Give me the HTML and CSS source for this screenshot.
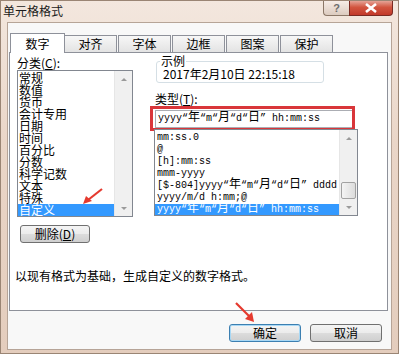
FILE: index.html
```html
<!DOCTYPE html>
<html lang="zh">
<head>
    <meta charset="UTF-8">
    <title>单元格格式</title>
    <link rel="stylesheet" href="styles.css">
</head>
<body>
    <div class="window">
        <div class="titlebar">
            <span class="title">单元格格式</span>
            <div class="controls">
                <span class="help">?</span>
                <span class="close">
                    <svg width="14" height="10" viewBox="0 0 14 10"><path d="M2 1 L12 9 M12 1 L2 9" stroke="#fff" stroke-width="2.6"/></svg>
                </span>
            </div>
        </div>

        <div class="client">
            <div class="tabs">
                <span class="tab active">数字</span>
                <span class="tab">对齐</span>
                <span class="tab">字体</span>
                <span class="tab">边框</span>
                <span class="tab">图案</span>
                <span class="tab">保护</span>
            </div>

            <div class="panel">
                <div class="cols">
                    <div class="left">
                        <div class="label">分类(<u>C</u>):</div>
                        <div class="listbox cat">
                            <ul>
                                <li>常规</li>
                                <li>数值</li>
                                <li>货币</li>
                                <li>会计专用</li>
                                <li>日期</li>
                                <li>时间</li>
                                <li>百分比</li>
                                <li>分数</li>
                                <li>科学记数</li>
                                <li>文本</li>
                                <li>特殊</li>
                                <li class="sel">自定义</li>
                            </ul>
                            <div class="vscroll">
                                <span class="arrow up"></span>
                                <span class="arrow down"></span>
                            </div>
                        </div>
                        <button class="btn del">删除(<u>D</u>)</button>
                    </div>

                    <div class="right">
                        <div class="sample">
                            <span class="sample-title">示例</span>
                            2017年2月10日 22:15:18
                        </div>
                        <div class="label type-label">类型(<u>T</u>):</div>
                        <div class="type-input mono">yyyy“<span class="cj">年</span>“m“<span class="cj">月</span>“d“<span class="cj">日</span>” hh:mm:ss</div>
                        <div class="listbox fmt mono">
                            <ul>
                                <li>mm:ss.0</li>
                                <li>@</li>
                                <li>[h]:mm:ss</li>
                                <li>mmm-yyyy</li>
                                <li>[$-804]yyyy“<span class="cj">年</span>“m“<span class="cj">月</span>“d“<span class="cj">日</span>” dddd</li>
                                <li>yyyy/m/d h:mm;@</li>
                                <li class="sel">yyyy“<span class="cj">年</span>“m“<span class="cj">月</span>“d“<span class="cj">日</span>” hh:mm:ss</li>
                            </ul>
                            <div class="vscroll">
                                <span class="arrow up"></span>
                                <span class="thumb"></span>
                                <span class="arrow down"></span>
                            </div>
                        </div>
                    </div>
                </div>
                <p class="desc">以现有格式为基础，生成自定义的数字格式。</p>
            </div>

            <div class="actions">
                <button class="btn ok">确定</button>
                <button class="btn">取消</button>
            </div>
        </div>

        <!-- annotation arrows -->
        <svg class="pointer pointer-cat" width="24" height="20" viewBox="0 0 24 20">
            <path d="M20 2 L6 13" stroke="#e53a2f" stroke-width="2.2"/>
            <path d="M1 17 L4 9 L10 14 Z" fill="#e53a2f"/>
        </svg>
        <svg class="pointer pointer-ok" width="24" height="24" viewBox="0 0 24 24">
            <path d="M2 2 L15 15" stroke="#e53a2f" stroke-width="2.2"/>
            <path d="M20 21 L11 18 L18 11 Z" fill="#e53a2f"/>
        </svg>
    </div>
</body>
</html>
```

FILE: styles.css
```css
body {
    margin: 0;
    padding: 0;
    font-family: "Noto Sans CJK SC", "Liberation Sans", sans-serif;
    font-size: 12px;
    color: #000;
}

.window {
    position: relative;
    width: 399px;
    height: 354px;
    box-sizing: border-box;
    background: linear-gradient(180deg, #f3e7de 0%, #ead6c8 40%, #e4cdbd 100%);
    border: 1px solid #9a8574;
    display: flex;
    flex-direction: column;
}

.titlebar {
    height: 21px;
    display: flex;
    align-items: flex-start;
}

.title {
    margin: 3px 0 0 2px;
    font-size: 12px;
    line-height: 14px;
    color: #1a1a1a;
}

.controls {
    margin-left: auto;
    margin-right: 5px;
    display: flex;
}

.help {
    width: 26px;
    height: 15px;
    box-sizing: border-box;
    border: 1px solid #8b7767;
    border-top: none;
    border-right: none;
    border-radius: 0 0 0 4px;
    background: linear-gradient(180deg, #f6ece6, #dccbbf);
    color: #6d6d6d;
    font-family: "Liberation Sans", sans-serif;
    font-weight: bold;
    font-size: 11px;
    line-height: 14px;
    text-align: center;
}

.close {
    width: 44px;
    height: 15px;
    box-sizing: border-box;
    border: 1px solid #7a2a22;
    border-top: none;
    border-radius: 0 0 4px 0;
    background: linear-gradient(180deg, #e5a396 0%, #d2553f 45%, #c2392a 100%);
    display: flex;
    justify-content: center;
    align-items: center;
}

.client {
    flex: 1;
    margin: 0 6px 3px 6px;
    background: #f8f8f8;
    border: 1px solid #b6a497;
    padding-top: 10px;
    display: flex;
    flex-direction: column;
}

.tabs {
    display: flex;
    align-items: flex-end;
    padding-left: 2px;
    height: 19px;
    position: relative;
    z-index: 1;
}

.tab {
    width: 53px;
    height: 17px;
    box-sizing: border-box;
    border: 1px solid #8e919a;
    border-bottom: none;
    margin-right: 1px;
    background: linear-gradient(180deg, #f7f7f7, #e3e3e3);
    text-align: center;
    line-height: 16px;
}

.tab.active {
    width: 55px;
    height: 20px;
    margin: 0 -1px -1px 0;
    background: #fff;
    line-height: 19px;
}

.panel {
    height: 259px;
    box-sizing: border-box;
    margin: 0 3px 0 1px;
    border: 1px solid #8e919a;
    background: #fff;
    padding: 3px 7px 0 7px;
}

.cols {
    display: flex;
    gap: 22px;
}

.left {
    width: 116px;
}

.label {
    height: 14px;
    line-height: 14px;
}

.label u {
    text-decoration: underline;
}

.listbox {
    position: relative;
    box-sizing: border-box;
    border: 1px solid #828790;
    background: #fff;
    overflow: hidden;
}

.listbox ul {
    list-style: none;
    margin: 0;
    padding: 0;
}

.listbox li {
    height: 12px;
    line-height: 12px;
    padding-left: 1px;
    white-space: nowrap;
}

.listbox li.sel {
    background: #3399ff;
    color: #fff;
}

.cat {
    height: 147px;
    margin-top: 0;
}

.cat ul {
    padding-top: 1px;
    width: 97px;
}

.cat li {
    font-size: 12px;
}

.vscroll {
    position: absolute;
    top: 0;
    right: 0;
    bottom: 0;
    width: 17px;
    background: #f0f0f0;
    border-left: 1px solid #e6e6e6;
}

.arrow {
    position: absolute;
    left: 6px;
    width: 0;
    height: 0;
    border-left: 3px solid transparent;
    border-right: 3px solid transparent;
}

.arrow.up {
    top: 7px;
    border-bottom: 3px solid #9a9a9a;
}

.arrow.down {
    bottom: 6px;
    border-top: 3px solid #9a9a9a;
}

.thumb {
    position: absolute;
    left: 1px;
    right: 1px;
    top: 52px;
    height: 15px;
    border: 1px solid #a2a2a2;
    border-radius: 2px;
    background: linear-gradient(90deg, #f4f4f4, #dcdcdc);
}

.btn {
    font-family: "Noto Sans CJK SC", "Liberation Sans", sans-serif;
    font-size: 12px;
    line-height: 14px;
    height: 18px;
    box-sizing: border-box;
    padding: 0;
    border: 1px solid #707070;
    border-radius: 3px;
    background: linear-gradient(180deg, #f4f4f4 0%, #ececec 48%, #dcdcdc 52%, #cfcfcf 100%);
    color: #000;
}

.del {
    width: 70px;
    margin: 8px 0 0 3px;
}

.right {
    width: 204px;
}

.sample {
    position: relative;
    width: 168px;
    height: 22px;
    box-sizing: border-box;
    margin: 5px 0 0 1px;
    border: 1px solid #d5dfe5;
    border-radius: 3px;
    padding: 6px 0 0 6px;
    line-height: 12px;
    font-size: 12px;
}

.sample-title {
    position: absolute;
    top: -8px;
    left: 3px;
    background: #fff;
    padding: 0 1px;
    line-height: 14px;
}

.type-label {
    margin-top: 9px;
}

.mono {
    font-family: "Liberation Mono", monospace;
    font-size: 10px;
}

.cj {
    font-family: "Noto Sans CJK SC", sans-serif;
    font-size: 12px;
    line-height: 1px;
}

.type-input {
    position: relative;
    width: 200px;
    height: 18px;
    box-sizing: border-box;
    margin-top: 4px;
    border: 1px solid #abadb3;
    padding-left: 2px;
    line-height: 16px;
}

.type-input::after {
    content: "";
    position: absolute;
    top: -5px;
    left: -6px;
    right: -1px;
    bottom: -4px;
    border: 3px solid #d9363a;
}

.fmt {
    width: 204px;
    height: 87px;
    margin: 1px 0 0 -1px;
}

.fmt ul {
    padding-top: 2px;
    width: 186px;
}

.fmt li {
    padding-left: 2px;
}

.desc {
    margin: 26px 0 0 -2px;
    line-height: 14px;
}

.actions {
    display: flex;
    justify-content: flex-end;
    gap: 9px;
    padding: 13px 9px 0 0;
}

.actions .btn {
    width: 72px;
}

.actions .ok {
    border-color: #3c7fb1;
    box-shadow: inset 0 0 0 1px #a8d8f5;
}

.pointer {
    position: absolute;
}

.pointer-cat {
    left: 81px;
    top: 186px;
}

.pointer-ok {
    left: 233px;
    top: 300px;
}
```
